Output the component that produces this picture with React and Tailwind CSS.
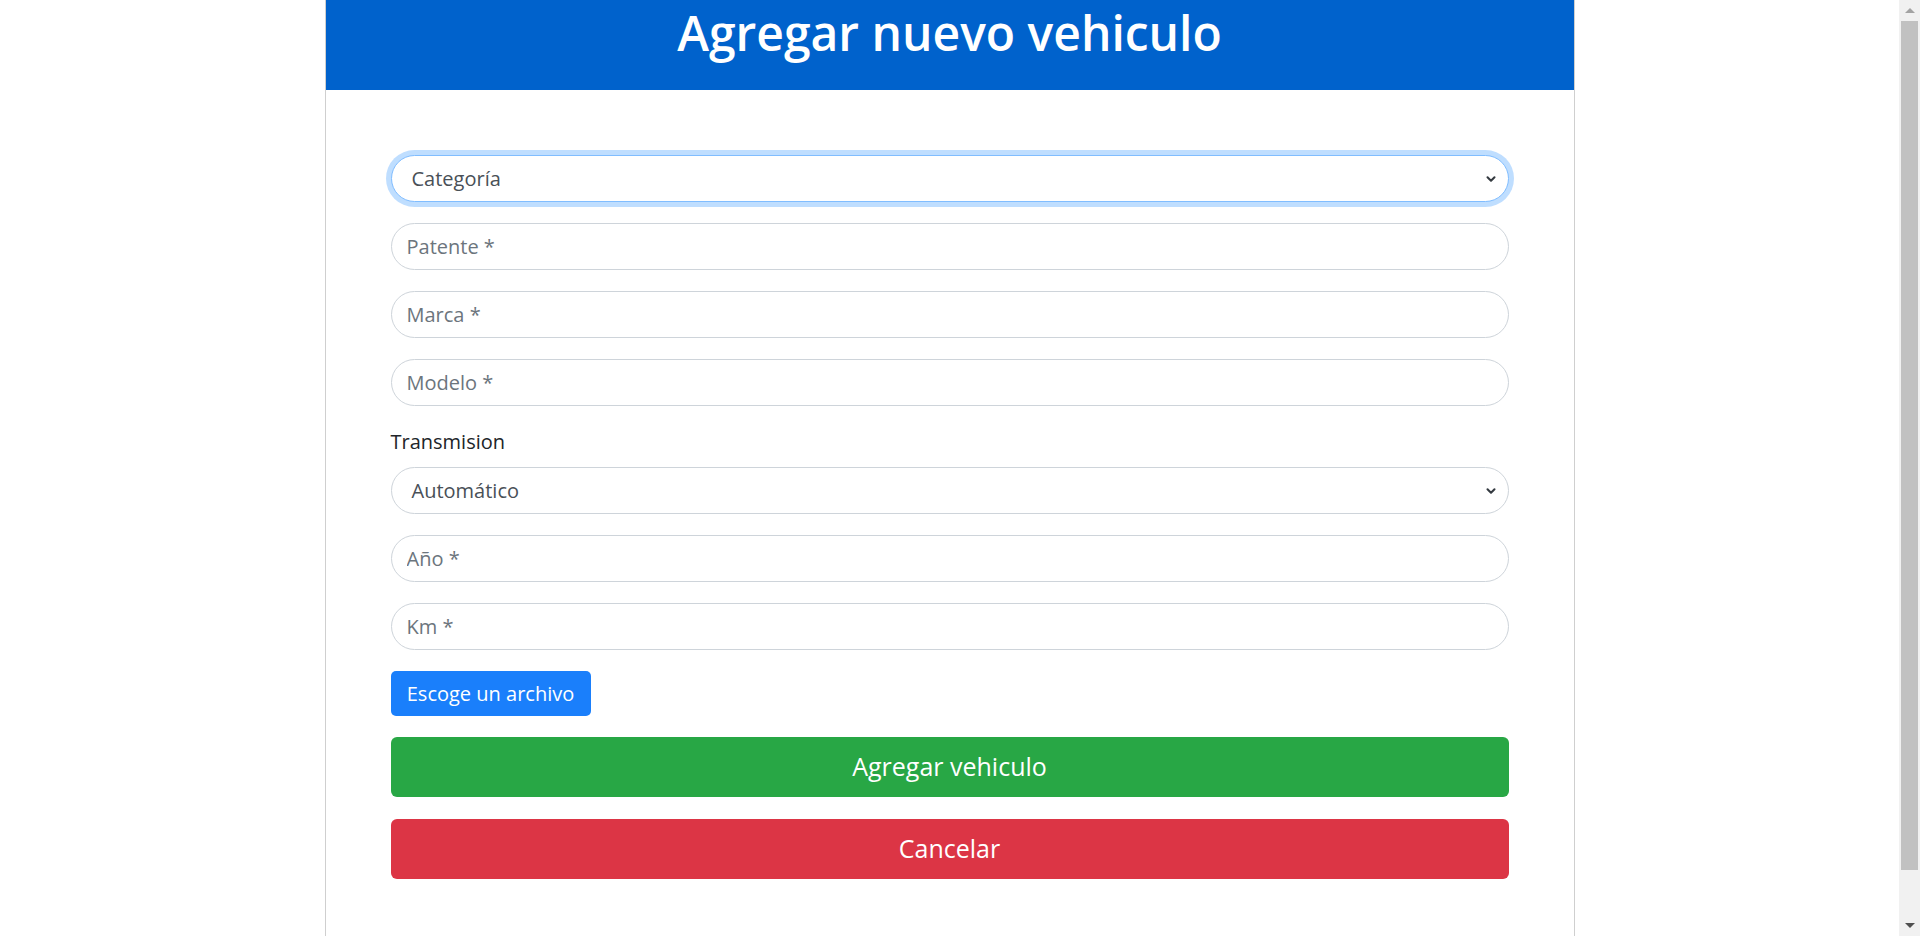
import { ChevronDown } from 'lucide-react';

const campos = ['Patente *', 'Marca *', 'Modelo *'];
const campos2 = ['Año *', 'Km *'];

const Select = ({ value, focused }) => (
  <div
    className={
      'relative flex items-center h-[47px] rounded-full bg-white pl-[20px] pr-[10px] text-[20px] text-[#495057] ' +
      (focused
        ? 'border border-[#80bdff] shadow-[0_0_0_5px_rgba(0,123,255,0.25)]'
        : 'border border-[#ced4da]')
    }
  >
    <span className="flex-1">{value}</span>
    <ChevronDown size={14} strokeWidth={3.5} className="text-[#343a40]" />
  </div>
);

const Input = ({ placeholder }) => (
  <input
    placeholder={placeholder}
    className="h-[47px] w-full rounded-full border border-[#ced4da] bg-white px-[15px] text-[20px] text-[#495057] placeholder:text-[#6c757d] outline-none"
  />
);

// barra de desplazamiento del navegador, tal como se ve en la captura
const Scrollbar = () => (
  <div className="flex h-screen w-[21px] shrink-0 flex-col items-center bg-[#f1f1f1]">
    <div className="flex h-[21px] items-center justify-center">
      <div className="h-0 w-0 border-x-[5px] border-b-[5px] border-x-transparent border-b-[#a3a3a3]" />
    </div>
    <div className="h-[849px] w-[17px] bg-[#c1c1c1]" />
    <div className="flex-1" />
    <div className="flex h-[21px] items-center justify-center">
      <div className="h-0 w-0 border-x-[5px] border-t-[5px] border-x-transparent border-t-[#505050]" />
    </div>
  </div>
);

export default function App() {
  return (
    <div
      className="flex h-screen overflow-hidden bg-white"
      style={{ fontFamily: '"Open Sans", "Noto Sans", sans-serif' }}
    >
      <div className="flex-1 overflow-hidden">
        <div className="mx-auto min-h-[960px] w-[1250px] border-x border-[#cfcfcf]">
          {/* Encabezado */}
          <div className="h-[90px] bg-[#0062cc] pt-[3px]">
            <h1 className="text-center text-[48px] font-semibold leading-[60px] text-white">
              Agregar nuevo vehiculo
            </h1>
          </div>

          {/* Formulario */}
          <form className="flex flex-col px-[65px] pt-[65px] pb-[70px]">
            <div className="mb-[21px]">
              <Select value="Categoría" focused />
            </div>
            {campos.map((c) => (
              <div key={c} className="mb-[21px]">
                <Input placeholder={c} />
              </div>
            ))}
            <label className="mb-[10px] text-[20px] leading-[30px] text-[#212529]">Transmision</label>
            <div className="mb-[21px]">
              <Select value="Automático" />
            </div>
            {campos2.map((c) => (
              <div key={c} className="mb-[21px]">
                <Input placeholder={c} />
              </div>
            ))}
            <div className="mb-[21px]">
              <button
                type="button"
                className="h-[45px] w-[200px] rounded-[5px] bg-[#1a7ffb] text-[20px] text-white"
              >
                Escoge un archivo
              </button>
            </div>
            <button
              type="button"
              className="mb-[22px] h-[60px] w-full rounded-[6px] bg-[#28a745] text-[25px] text-white"
            >
              Agregar vehiculo
            </button>
            <button
              type="button"
              className="h-[60px] w-full rounded-[6px] bg-[#dc3545] text-[25px] text-white"
            >
              Cancelar
            </button>
          </form>
        </div>
      </div>
      <Scrollbar />
    </div>
  );
}
